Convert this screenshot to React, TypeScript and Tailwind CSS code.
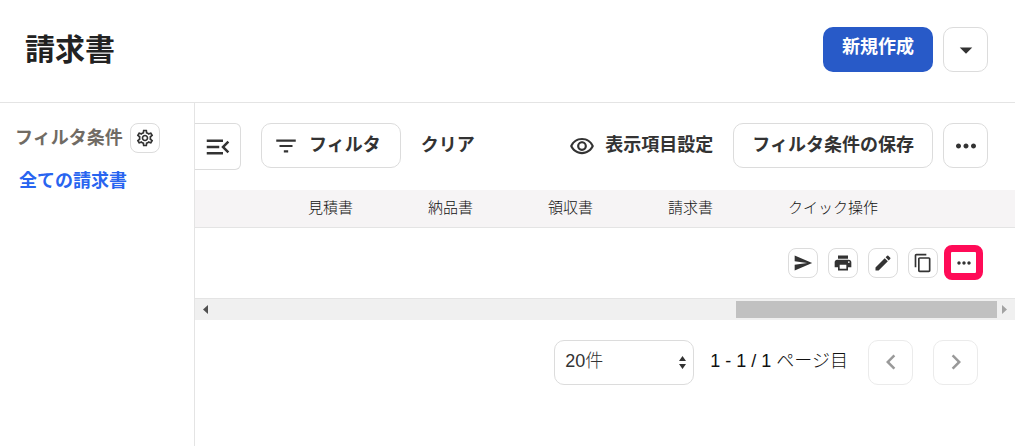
import type { ComponentType, ReactNode } from "react";
import {
  MdArrowDropDown,
  MdChevronLeft,
  MdChevronRight,
  MdContentCopy,
  MdEdit,
  MdFilterList,
  MdMenuOpen,
  MdMoreHoriz,
  MdOutlineRemoveRedEye,
  MdOutlineSettings,
  MdPrint,
  MdSend,
} from "react-icons/md";

type IconType = ComponentType<{ size?: number }>;

function IconButton({ label, faded, children }: { label: string; faded?: boolean; children: ReactNode }) {
  return (
    <button
      type="button"
      aria-label={label}
      disabled={faded}
      className={
        "flex size-[45px] shrink-0 items-center justify-center rounded-[10px] border " +
        (faded ? "border-[#ebebeb] text-[#999999]" : "border-[#dcdcdc] text-[#333333]")
      }
    >
      {children}
    </button>
  );
}

function SmallButton({ label, icon: Icon }: { label: string; icon: IconType }) {
  return (
    <button
      type="button"
      aria-label={label}
      className="flex size-[30px] shrink-0 items-center justify-center rounded-lg border border-[#dcdcdc]"
    >
      <Icon size={20} />
    </button>
  );
}

const columns = ["見積書", "納品書", "領収書", "請求書"];

function InvoiceTable() {
  return (
    <table className="w-full table-fixed border-collapse text-[15px]">
      <colgroup>
        <col />
        {columns.map((c) => (
          <col key={c} className="w-[120px]" />
        ))}
        <col className="w-[227px]" />
      </colgroup>
      <thead>
        <tr className="h-[37px] border-b border-[#e4e4e4] bg-[#f6f4f5] text-left text-[#111111]">
          <td />
          {columns.map((c) => (
            <th key={c} scope="col" className="p-0 font-light">
              {c}
            </th>
          ))}
          <th scope="col" className="p-0 font-light">
            クイック操作
          </th>
        </tr>
      </thead>
      <tbody>
        <tr className="h-[71px] border-b border-[#e4e4e4]">
          <td />
          {columns.map((c) => (
            <td key={c} />
          ))}
          <td className="p-0">
            <div className="flex items-center">
              <div className="flex gap-[10px]">
                <SmallButton label="送信" icon={MdSend} />
                <SmallButton label="印刷" icon={MdPrint} />
                <SmallButton label="編集" icon={MdEdit} />
                <SmallButton label="複製" icon={MdContentCopy} />
              </div>
              <button
                type="button"
                aria-label="その他の操作"
                className="ml-[6px] flex h-[35px] w-[39px] items-center justify-center rounded-lg border-[7px] border-[#ff0b57]"
              >
                <MdMoreHoriz size={20} className="shrink-0" />
              </button>
            </div>
          </td>
        </tr>
      </tbody>
    </table>
  );
}

function ScrollTrack() {
  return (
    <div className="flex h-[21px] items-center bg-[#f0f0f0] px-2">
      <button type="button" aria-label="左へスクロール" className="text-[#505050]">
        <svg width="5" height="9" viewBox="0 0 5 9" fill="currentColor">
          <path d="M5 0v9L0 4.500z" />
        </svg>
      </button>
      <div className="flex flex-1 justify-end px-[5px]">
        <div className="h-[17px] w-1/3 bg-[#c1c1c1]" />
      </div>
      <button type="button" aria-label="右へスクロール" className="text-[#a3a3a3]">
        <svg width="5" height="9" viewBox="0 0 5 9" fill="currentColor">
          <path d="M0 0v9l5-4.500z" />
        </svg>
      </button>
    </div>
  );
}

export default function App() {
  return (
    <div className="flex min-h-screen flex-col bg-white font-['Liberation_Sans','Noto_Sans_CJK_JP',sans-serif] text-[#333333]">
      <header className="flex items-center justify-between border-b border-[#e4e4e4] pt-[27px] pr-[27px] pb-[30px] pl-[25px]">
        <h1 className="text-[30px] leading-[45px] font-bold text-[#222222]">請求書</h1>
        <div className="flex gap-[10px]">
          <button
            type="button"
            className="h-[45px] rounded-[10px] bg-[#285ac8] px-[19px] pb-1 text-[18px] font-bold text-white"
          >
            新規作成
          </button>
          <IconButton label="作成メニュー">
            <MdArrowDropDown size={30} />
          </IconButton>
        </div>
      </header>

      <div className="flex flex-1">
        <aside className="w-[195px] shrink-0 border-r border-[#e4e4e4] pt-5 pl-[15px]">
          <div className="flex items-center gap-[7px]">
            <h2 className="text-[18px] leading-6 font-bold text-[#706b64]">フィルタ条件</h2>
            <SmallButton label="フィルタ条件の設定" icon={MdOutlineSettings} />
          </div>
          <nav className="mt-4 pl-1">
            <a href="#all" className="text-[18px] leading-6 font-bold text-[#2864f0]">
              全ての請求書
            </a>
          </nav>
        </aside>

        <main className="min-w-0 flex-1">
          <div className="flex items-start pt-5 pr-[27px] pb-5 text-[18px] font-bold">
            <button
              type="button"
              aria-label="サイドバーを閉じる"
              className="flex h-[47px] w-[46px] items-center justify-center rounded-r-md border border-l-0 border-[#dcdcdc]"
            >
              <MdMenuOpen size={30} />
            </button>
            <button
              type="button"
              className="ml-5 flex h-[45px] items-center rounded-[10px] border border-[#dcdcdc] pr-[19px] pl-[11px]"
            >
              <MdFilterList size={26} />
              <span className="pb-px pl-[10px]">フィルタ</span>
            </button>
            <button type="button" className="ml-5 h-[45px] pb-px">
              クリア
            </button>
            <div className="ml-auto flex">
              <button type="button" className="flex h-[45px] items-center gap-[10px]">
                <MdOutlineRemoveRedEye size={26} />
                <span className="pb-px">表示項目設定</span>
              </button>
              <button
                type="button"
                className="ml-5 h-[45px] rounded-[10px] border border-[#dcdcdc] px-[18px] pb-px"
              >
                フィルタ条件の保存
              </button>
              <div className="ml-[10px]">
                <IconButton label="その他">
                  <MdMoreHoriz size={30} />
                </IconButton>
              </div>
            </div>
          </div>

          <InvoiceTable />
          <ScrollTrack />

          <div className="flex items-center justify-end gap-5 pt-5 pr-[37px] text-[18px]">
            <div className="flex items-center gap-4">
              <div className="relative">
                <select
                  aria-label="表示件数"
                  className="h-[45px] w-[140px] appearance-none rounded-[10px] border border-[#dcdcdc] bg-white pb-px pl-[10px] font-light"
                >
                  <option>20件</option>
                </select>
                <svg
                  className="pointer-events-none absolute top-4 right-2"
                  width="7"
                  height="13"
                  viewBox="0 0 7 13"
                  fill="currentColor"
                >
                  <path d="M3.500 0L7 5H0zM3.500 13L0 8h7z" />
                </svg>
              </div>
              <span className="pb-px font-light text-[#111111]">1 - 1 / 1 ページ目</span>
            </div>
            <IconButton label="前のページ" faded>
              <MdChevronLeft size={30} />
            </IconButton>
            <IconButton label="次のページ" faded>
              <MdChevronRight size={30} />
            </IconButton>
          </div>
        </main>
      </div>
    </div>
  );
}
